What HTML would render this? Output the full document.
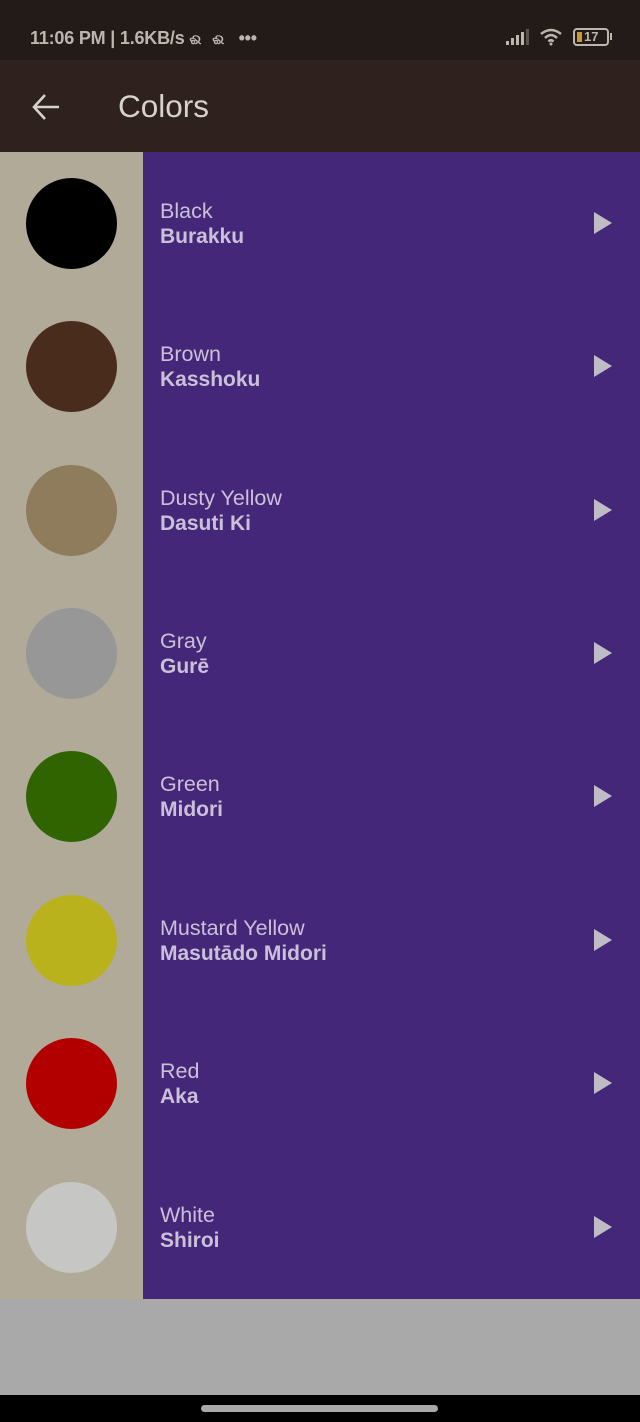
<!DOCTYPE html>
<html><head><meta charset="utf-8"><style>
*{margin:0;padding:0;box-sizing:border-box}
body{width:640px;height:1422px;position:relative;overflow:hidden;background:#a9a9a9;font-family:"Liberation Sans",sans-serif}
.sb{position:absolute;left:0;top:0;width:640px;height:60px;background:#221b18;color:#bdb6ae}
.hd{position:absolute;left:0;top:60px;width:640px;height:92px;background:#2f211e}
.left{position:absolute;left:0;top:152px;width:143px;height:1147px;background:#b2aa99}
.right{position:absolute;left:143px;top:152px;width:497px;height:1147px;background:#45277a}
.c{position:absolute;left:26px;width:91px;height:91px;border-radius:50%}
.t{position:absolute;left:160px;color:#cbc0d8;font-size:21.5px;line-height:26px}
.t b{display:block;font-size:21px}
.a{position:absolute;left:594px;width:0;height:0;border-left:18px solid #c0bcc6;border-top:11px solid transparent;border-bottom:11px solid transparent}
.nav{position:absolute;left:0;top:1395px;width:640px;height:27px;background:#000}
.pill{position:absolute;left:201px;top:1405px;width:237px;height:7px;border-radius:4px;background:#a9a9a9}
</style></head><body>
<div class="sb">
<div style="position:absolute;left:30px;top:28px;font-size:18px;font-weight:bold;letter-spacing:-0.2px;white-space:nowrap">11:06 PM | 1.6KB/s <span style="font-size:14px">ଈ &nbsp;&nbsp;ଈ</span> &nbsp;&nbsp;•••</div>
<svg style="position:absolute;left:505px;top:28px" width="26" height="18"><rect x="1" y="13" width="3" height="4" fill="#bdb6ae"/><rect x="6" y="10" width="3" height="7" fill="#bdb6ae"/><rect x="11" y="7" width="3" height="10" fill="#bdb6ae"/><rect x="16" y="4" width="3" height="13" fill="#bdb6ae"/><rect x="21" y="1" width="3" height="16" fill="#5a524c"/></svg>
<svg style="position:absolute;left:539px;top:27px" width="24" height="19" fill="none" stroke="#bdb6ae" stroke-width="2.5"><path d="M2 7 Q12 -1 22 7"/><path d="M6 11 Q12 5 18 11"/><path d="M9.5 14.5 Q12 12 14.5 14.5"/><circle cx="12" cy="17" r="1.5" fill="#bdb6ae" stroke="none"/></svg>
<div style="position:absolute;left:573px;top:28px;width:36px;height:18px;border:2px solid #bdb6ae;border-radius:4px;font-size:13px;font-weight:bold;line-height:14px;padding-left:9px"><span style="position:absolute;left:2px;top:2px;width:5px;height:10px;background:#c89a3a"></span>17</div>
<div style="position:absolute;left:610px;top:33px;width:2px;height:7px;background:#bdb6ae"></div>
</div>
<div class="hd">
<svg style="position:absolute;left:31px;top:33px" width="30" height="28" fill="none" stroke="#d8d2cc" stroke-width="2.6"><path d="M28 14H3M14 2L3 14l11 12"/></svg>
<div style="position:absolute;left:118px;top:28px;font-size:31.5px;color:#d8d2cc">Colors</div>
</div>
<div class="left"></div><div class="right"></div>

<div class="c" style="top:178px;background:#000"></div>
<div class="c" style="top:321px;background:#4a2c1d"></div>
<div class="c" style="top:465px;background:#8f7c5c"></div>
<div class="c" style="top:608px;background:#979797"></div>
<div class="c" style="top:751px;background:#2f6400"></div>
<div class="c" style="top:895px;background:#b9b21d"></div>
<div class="c" style="top:1038px;background:#b20000"></div>
<div class="c" style="top:1182px;background:#c6c6c4"></div>

<div class="t" style="top:198px">Black<b>Burakku</b></div>
<div class="t" style="top:341px">Brown<b>Kasshoku</b></div>
<div class="t" style="top:485px">Dusty Yellow<b>Dasuti Ki</b></div>
<div class="t" style="top:628px">Gray<b>Gurē</b></div>
<div class="t" style="top:771px">Green<b>Midori</b></div>
<div class="t" style="top:915px">Mustard Yellow<b>Masutādo Midori</b></div>
<div class="t" style="top:1058px">Red<b>Aka</b></div>
<div class="t" style="top:1202px">White<b>Shiroi</b></div>

<div class="a" style="top:212px"></div>
<div class="a" style="top:355px"></div>
<div class="a" style="top:499px"></div>
<div class="a" style="top:642px"></div>
<div class="a" style="top:785px"></div>
<div class="a" style="top:929px"></div>
<div class="a" style="top:1072px"></div>
<div class="a" style="top:1216px"></div>

<div class="nav"></div><div class="pill"></div>
</body></html>
